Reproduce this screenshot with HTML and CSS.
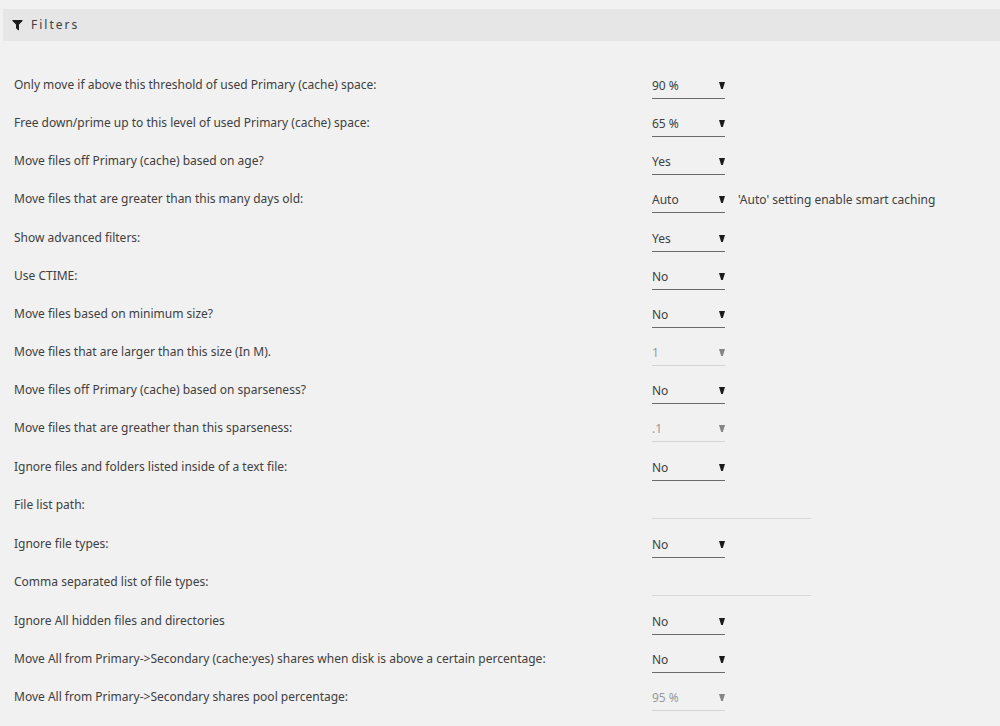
FILE: index.html
```html
<!DOCTYPE html>
<html lang="en">
<head>
<meta charset="utf-8">
<title>Filters</title>
<link rel="stylesheet" href="styles.css">
</head>
<body>
<header class="title">
<svg class="title-icon" viewBox="0 0 11 12" aria-hidden="true"><path d="M.9 1h9.2c.5 0 .7.5.4.9L7 5.4v5.4c0 .5-.5.7-.8.4L4.3 9.5a.7.7 0 0 1-.3-.5V5.4L.5 1.9C.2 1.5.4 1 .9 1z"/></svg>
<h1 class="title-text">Filters</h1>
</header>
<form class="settings">
<div class="group">
<div class="row"><label class="name" for="threshold">Only move if above this threshold of used Primary (cache) space:</label><div class="value"><select class="select" id="threshold"><option>90 %</option></select></div></div>
<div class="row"><label class="name" for="level">Free down/prime up to this level of used Primary (cache) space:</label><div class="value"><select class="select" id="level"><option>65 %</option></select></div></div>
<div class="row"><label class="name" for="age">Move files off Primary (cache) based on age?</label><div class="value"><select class="select" id="age"><option>Yes</option><option>No</option></select></div></div>
<div class="row"><label class="name" for="days">Move files that are greater than this many days old:</label><div class="value"><select class="select" id="days"><option>Auto</option></select><span class="note">'Auto' setting enable smart caching</span></div></div>
</div>
<div class="group">
<div class="row"><label class="name" for="advanced">Show advanced filters:</label><div class="value"><select class="select" id="advanced"><option>Yes</option><option>No</option></select></div></div>
<div class="row"><label class="name" for="ctime">Use CTIME:</label><div class="value"><select class="select" id="ctime"><option>No</option><option>Yes</option></select></div></div>
<div class="row"><label class="name" for="minsize">Move files based on minimum size?</label><div class="value"><select class="select" id="minsize"><option>No</option><option>Yes</option></select></div></div>
<div class="row"><label class="name" for="size">Move files that are larger than this size (In M).</label><div class="value"><select class="select" id="size" disabled><option>1</option></select></div></div>
<div class="row"><label class="name" for="sparse">Move files off Primary (cache) based on sparseness?</label><div class="value"><select class="select" id="sparse"><option>No</option><option>Yes</option></select></div></div>
<div class="row"><label class="name" for="sparseness">Move files that are greather than this sparseness:</label><div class="value"><select class="select" id="sparseness" disabled><option>.1</option></select></div></div>
</div>
<div class="group">
<div class="row"><label class="name" for="ignorelist">Ignore files and folders listed inside of a text file:</label><div class="value"><select class="select" id="ignorelist"><option>No</option><option>Yes</option></select></div></div>
<div class="row"><label class="name" for="listpath">File list path:</label><div class="value"><input class="text" type="text" id="listpath"></div></div>
</div>
<div class="group">
<div class="row"><label class="name" for="ignoretypes">Ignore file types:</label><div class="value"><select class="select" id="ignoretypes"><option>No</option><option>Yes</option></select></div></div>
<div class="row"><label class="name" for="types">Comma separated list of file types:</label><div class="value"><input class="text" type="text" id="types"></div></div>
</div>
<div class="group">
<div class="row"><label class="name" for="hidden">Ignore All hidden files and directories</label><div class="value"><select class="select" id="hidden"><option>No</option><option>Yes</option></select></div></div>
<div class="row"><label class="name" for="moveall">Move All from Primary-&gt;Secondary (cache:yes) shares when disk is above a certain percentage:</label><div class="value"><select class="select" id="moveall"><option>No</option><option>Yes</option></select></div></div>
<div class="row"><label class="name" for="pool">Move All from Primary-&gt;Secondary shares pool percentage:</label><div class="value"><select class="select" id="pool" disabled><option>95 %</option></select></div></div>
</div>
</form>
</body>
</html>
```

FILE: styles.css
```css
* {
  box-sizing: border-box;
}

body {
  margin: 0;
  padding-top: 9px;
  background: #f1f1f1;
  color: #404040;
  font: 12px/30px "Noto Sans", "Open Sans", sans-serif;
}

.title {
  display: flex;
  align-items: center;
  gap: 8px;
  height: 32px;
  margin-left: 3px;
  padding-left: 9px;
  background: #e6e6e6;
}

.title-icon {
  width: 11px;
  height: 12px;
  fill: #1c1b1b;
}

.title-text {
  margin: 0;
  font-size: 12px;
  font-weight: 400;
  letter-spacing: 2px;
}

.settings {
  display: flex;
  flex-direction: column;
  gap: 1px;
  padding: 29px 0 0 14px;
}

.row {
  display: grid;
  grid-template-columns: 11fr 6fr;
  min-height: 38px;
}

.value {
  display: flex;
  align-items: flex-start;
  gap: 13px;
  padding-top: 1px;
}

.select,
.text {
  height: 28px;
  margin: 0;
  padding: 0;
  border: 0;
  border-bottom: 1px solid #6a6a6a;
  border-radius: 0;
  outline: 0;
  background: transparent;
  color: inherit;
  font: inherit;
}

.select {
  appearance: none;
  width: 73px;
  background: url("data:image/svg+xml,%3Csvg xmlns='http://www.w3.org/2000/svg' viewBox='0 0 6 7'%3E%3Cpath d='M0 0h6L3.8 7H2.2z' fill='%231c1b1b'/%3E%3C/svg%3E") no-repeat right 11px / 6px 7px;
}

.select:disabled {
  opacity: .5;
  border-color: #b8b8b8;
}

.text {
  width: 159px;
  border-color: #d8d8d8;
}
```
